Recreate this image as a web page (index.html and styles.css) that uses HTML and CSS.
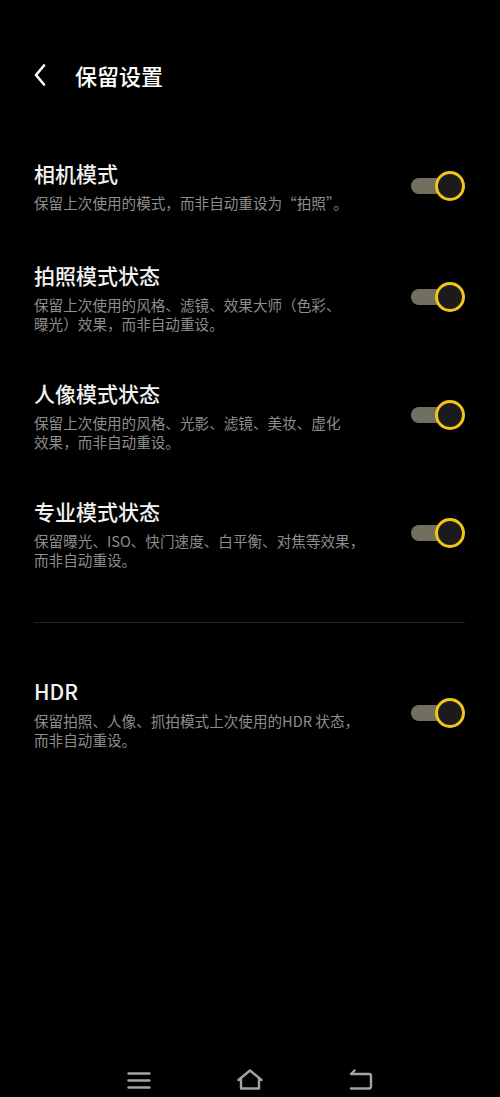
FILE: index.html
```html
<!DOCTYPE html>
<html lang="zh-CN">
<head>
<meta charset="utf-8">
<link rel="stylesheet" href="styles.css">
</head>
<body>
<div class="page">
  <header class="header">
    <svg class="back" viewBox="0 0 12 22" width="12" height="22"><path d="M10 1.5 L2 11 L10 20.5" fill="none" stroke="#fff" stroke-width="2.6" stroke-linecap="round" stroke-linejoin="round"/></svg>
    <h1 class="title">保留设置</h1>
  </header>

  <main class="list">
    <section class="group">
      <div class="row first">
        <div class="text">
          <div class="name">相机模式</div>
          <div class="desc">保留上次使用的模式，而非自动重设为“拍照”。</div>
        </div>
        <div class="toggle"><span class="track"></span><span class="knob"></span></div>
      </div>
      <div class="row">
        <div class="text">
          <div class="name">拍照模式状态</div>
          <div class="desc">保留上次使用的风格、滤镜、效果大师（色彩、<br>曝光）效果，而非自动重设。</div>
        </div>
        <div class="toggle"><span class="track"></span><span class="knob"></span></div>
      </div>
      <div class="row">
        <div class="text">
          <div class="name">人像模式状态</div>
          <div class="desc">保留上次使用的风格、光影、滤镜、美妆、虚化<br>效果，而非自动重设。</div>
        </div>
        <div class="toggle"><span class="track"></span><span class="knob"></span></div>
      </div>
      <div class="row">
        <div class="text">
          <div class="name">专业模式状态</div>
          <div class="desc">保留曝光、ISO、快门速度、白平衡、对焦等效果，<br>而非自动重设。</div>
        </div>
        <div class="toggle"><span class="track"></span><span class="knob"></span></div>
      </div>
    </section>

    <hr class="sep">

    <section class="group">
      <div class="row">
        <div class="text">
          <div class="name">HDR</div>
          <div class="desc">保留拍照、人像、抓拍模式上次使用的HDR 状态，<br>而非自动重设。</div>
        </div>
        <div class="toggle"><span class="track"></span><span class="knob"></span></div>
      </div>
    </section>
  </main>

  <nav class="nav">
    <svg viewBox="0 0 26 22" width="26" height="22"><path d="M2.5 4.5 H23.5 M2.5 11.5 H23.5 M2.5 18.5 H23.5" fill="none" stroke="#a3a3a3" stroke-width="2.4" stroke-linecap="round"/></svg>
    <svg viewBox="0 0 26 22" width="26" height="22"><path d="M1.5 11 L13 1.5 L24.5 11 M4 9.5 V19.5 H22 V9.5" fill="none" stroke="#a3a3a3" stroke-width="2.4" stroke-linecap="round" stroke-linejoin="round"/></svg>
    <svg viewBox="0 0 26 22" width="26" height="22"><path d="M6.5 1.5 L3 5 H21 Q23 5 23 7 V17 Q23 19.5 21 19.5 H3" fill="none" stroke="#a3a3a3" stroke-width="2.4" stroke-linecap="round" stroke-linejoin="round"/></svg>
  </nav>
</div>
</body>
</html>
```

FILE: styles.css
```css
html, body {
  margin: 0;
  padding: 0;
  background: #000;
}

.page {
  width: 500px;
  height: 1097px;
  display: flex;
  flex-direction: column;
  background: #000;
  font-family: "Noto Sans CJK SC", "Noto Sans", sans-serif;
  color: #fff;
  overflow: hidden;
}

.header {
  display: flex;
  align-items: center;
  height: 38px;
  margin-top: 56px;
  padding-left: 34px;
}

.back {
  display: block;
}

.title {
  margin: 0 0 0 29px;
  font-size: 22px;
  font-weight: 500;
  line-height: 38px;
  color: #fff;
}

.list {
  padding: 65px 35px 0 34px;
}

.group {
  display: flex;
  flex-direction: column;
  gap: 46px;
}

.row {
  display: flex;
  align-items: center;
  justify-content: space-between;
}

.row.first {
  margin-bottom: 3px;
}

.text {
  display: flex;
  flex-direction: column;
}

.name {
  font-size: 21px;
  line-height: 28px;
  font-weight: 500;
  color: #f2f2f2;
}

.desc {
  margin-top: 6px;
  font-size: 14.6px;
  line-height: 19px;
  color: #8d8d8d;
  white-space: nowrap;
}

.toggle {
  position: relative;
  width: 54px;
  height: 30px;
  flex: none;
}

.track {
  position: absolute;
  left: 0;
  top: 7px;
  width: 42px;
  height: 16px;
  border-radius: 8px;
  background: #717060;
}

.knob {
  position: absolute;
  right: 0;
  top: 0;
  width: 24px;
  height: 24px;
  border: 3px solid #f4c514;
  border-radius: 50%;
  background: #1b1b1b;
}

.sep {
  margin: 53px 0 54px;
  border: 0;
  height: 1px;
  background: #222;
}

.nav {
  margin-top: auto;
  height: 34px;
  display: flex;
  align-items: center;
  justify-content: center;
  gap: 85px;
}

.nav svg {
  display: block;
}
```
